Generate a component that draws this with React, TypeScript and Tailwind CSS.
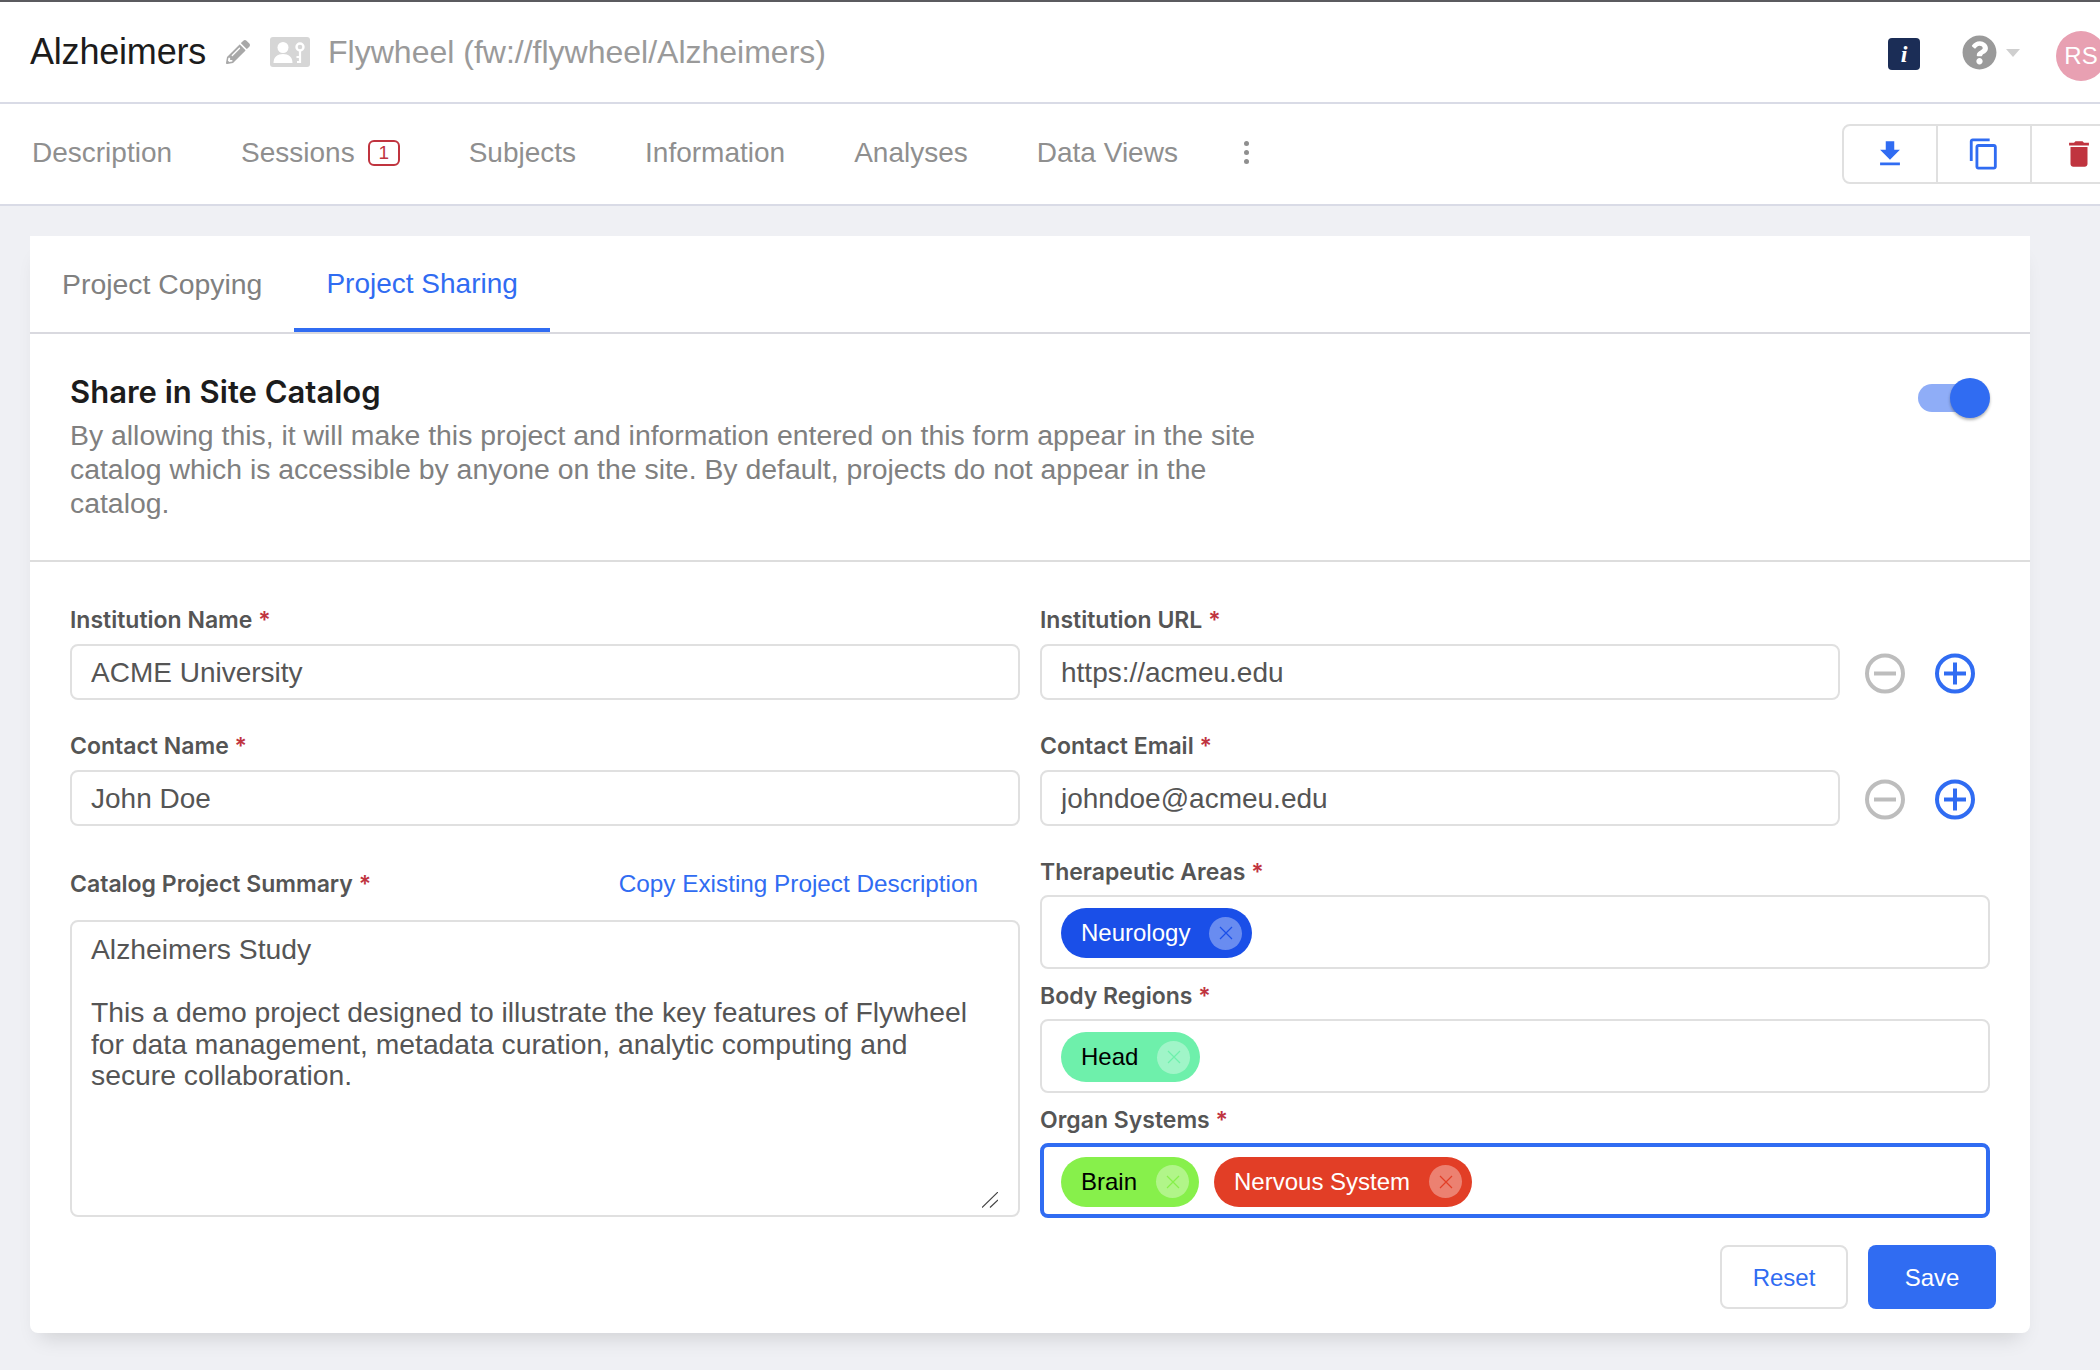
import { FaPencilAlt, FaQuestionCircle } from 'react-icons/fa'
import { MdContentCopy, MdDelete, MdFileDownload } from 'react-icons/md'

const navItems = ['Description', 'Sessions', 'Subjects', 'Information', 'Analyses', 'Data Views']

function Label({ text, className = '' }: { text: string; className?: string }) {
  return (
    <label className={`block h-8 font-['Inter',sans-serif] text-[23px] leading-8 font-semibold text-[#555] ${className}`}>
      {text} <span className="text-[#c0343f]">*</span>
    </label>
  )
}

function TextInput({ value }: { value: string }) {
  return (
    <input
      readOnly
      value={value}
      className="h-[56px] w-full rounded-lg border-2 border-[#e0e0e0] bg-white px-[19px] pt-[2px] text-[28px] text-[#555] outline-none"
    />
  )
}

function RoundIcon({ kind }: { kind: 'minus' | 'plus' }) {
  const color = kind === 'plus' ? '#306cf2' : '#bdbdbd'
  return (
    <svg viewBox="0 0 40 40" className="mt-[3px] h-[41px] w-10 shrink-0" fill="none" stroke={color} strokeWidth="4">
      <circle cx="20" cy="20" r="18" />
      <path d="M9 20h22" />
      {kind === 'plus' && <path d="M20 9v22" />}
    </svg>
  )
}

function Chip({ text, bg, x, dark }: { text: string; bg: string; x: string; dark?: boolean }) {
  return (
    <span className={`mt-[2px] flex h-[50px] items-center gap-[19px] rounded-full pr-[10px] pl-5 text-2xl ${bg} ${dark ? 'text-black' : 'text-white'}`}>
      {text}
      <span className="flex h-[33px] w-[33px] items-center justify-center rounded-full bg-white/35">
        <svg viewBox="0 0 16 16" className="h-4 w-4" fill="none" stroke={x} strokeWidth="1.2">
          <path d="M2 2l12 12M14 2L2 14" />
        </svg>
      </span>
    </span>
  )
}

function TagBox({ children, focused }: { children: React.ReactNode; focused?: boolean }) {
  return (
    <div className={`flex items-center gap-[15px] rounded-lg bg-white ${focused ? 'h-[75px] border-4 border-[#306cf2] pl-[17px]' : 'h-[74px] border-2 border-[#e0e0e0] pl-[19px]'}`}>
      {children}
    </div>
  )
}

function ProjectCardIcon() {
  return (
    <svg viewBox="0 0 40 30" className="h-[30px] w-10" fill="none">
      <rect width="40" height="30" rx="3" fill="#d6d6d6" />
      <circle cx="13" cy="10.5" r="5.5" fill="#fff" />
      <path d="M3.5 26c0-6 4-9 9.500-9s9.500 3 9.500 9z" fill="#fff" />
      <circle cx="30" cy="10" r="3.500" stroke="#fff" strokeWidth="2.400" />
      <path d="M30 14v12M30 20h-3.500M30 25h-3" stroke="#fff" strokeWidth="2.200" />
    </svg>
  )
}

export default function App() {
  return (
    <div className="h-[1370px] w-[2100px] overflow-hidden bg-[#eff0f4] font-['Liberation_Sans',sans-serif]">
      <header className="flex h-[104px] items-center border-t-2 border-b-2 border-t-[#5b5b5f] border-b-[#d9dbe6] bg-white pl-[30px]">
        <h1 className="text-[36px] tracking-[-0.2px] text-[#1c1c1c]">Alzheimers</h1>
        <FaPencilAlt className="ml-5 h-6 w-6 text-[#a8a8a8]" />
        <span className="ml-5"><ProjectCardIcon /></span>
        <span className="ml-[18px] text-[32px] text-[#9a9a9a]">Flywheel (fw://flywheel/Alzheimers)</span>
        <div className="ml-auto flex -mr-[6px] items-center">
          <span className="mt-1 flex h-8 w-8 items-center justify-center rounded bg-[#1b2d56] font-['Liberation_Serif',serif] text-[24px] font-bold text-white italic">i</span>
          <FaQuestionCircle className="ml-[42px] h-[35px] w-[35px] text-[#9a9a9a]" />
          <span className="mt-[2px] ml-[9px] h-0 w-0 border-x-[7.5px] border-t-[8px] border-x-transparent border-t-[#cfcfcf]" />
          <span className="mt-2 ml-9 flex h-[50px] w-[50px] items-center justify-center rounded-full bg-[#e8a0b2] text-2xl text-white">RS</span>
        </div>
      </header>

      <nav className="flex h-[102px] items-center border-b-2 border-[#d9dbe6] bg-white pl-8">
        <div className="flex items-center gap-[69px] pb-[2px] text-[28px] text-[#8f8f8f]">
          {navItems.map((item) => (
            <span key={item} className="flex items-center gap-[13px]">
              {item}
              {item === 'Sessions' && (
                <span className="flex h-[26px] w-8 items-center justify-center rounded-md border-2 border-[#c0343f] text-[19px] text-[#c0343f]">1</span>
              )}
            </span>
          ))}
        </div>
        <span className="mb-[4px] ml-[66px] flex flex-col gap-[4px]">
          <i className="h-[5px] w-[5px] rounded-full bg-[#8f8f8f]" />
          <i className="h-[5px] w-[5px] rounded-full bg-[#8f8f8f]" />
          <i className="h-[5px] w-[5px] rounded-full bg-[#8f8f8f]" />
        </span>
        <div className="ml-auto -mr-[28px] flex h-[60px] divide-x-2 divide-[#e0e0e0] rounded-lg border-2 border-[#e0e0e0]">
          <span className="flex w-[94px] items-center justify-center"><MdFileDownload className="h-[34px] w-[34px] text-[#306cf2]" /></span>
          <span className="flex w-[94px] items-center justify-center"><MdContentCopy className="h-[34px] w-[34px] text-[#306cf2]" /></span>
          <span className="flex w-[94px] items-center justify-center"><MdDelete className="h-[34px] w-[34px] text-[#c0343f]" /></span>
        </div>
      </nav>

      <main className="ml-[30px] mt-[30px] w-[2000px] rounded-b-lg bg-white shadow-[0_14px_20px_-10px_rgba(0,0,0,0.14)]">
        <div className="flex h-[98px] border-b-2 border-[#d9d9df]">
          <span className="flex h-[96px] items-center border-b-4 border-transparent px-8 pt-1 text-[28.4px] text-[#808080]">Project Copying</span>
          <span className="flex h-[96px] items-center border-b-4 border-[#306cf2] px-8 pt-1 text-[28px] text-[#306cf2]">Project Sharing</span>
        </div>

        <section className="flex items-start justify-between border-b-2 border-[#ddd] pt-[42px] pr-10 pb-10 pl-10">
          <div className="w-[1200px]">
            <h2 className="h-[42px] font-['Inter',sans-serif] text-[31px] leading-[32px] font-semibold text-[#1c1c1c]">Share in Site Catalog</h2>
            <p className="text-[28.4px] leading-[34px] text-[#808080]">
              By allowing this, it will make this project and information entered on this form appear in the site catalog which is accessible by anyone on the site. By default, projects do not appear in the catalog.
            </p>
          </div>
          <div className="relative mt-[2px] h-10 w-[72px]">
            <div className="absolute top-[6px] left-0 h-7 w-[67px] rounded-full bg-[#8fadf7]" />
            <div className="absolute top-0 right-0 h-10 w-10 rounded-full bg-[#306cf2] shadow-[0_2px_3px_rgba(0,0,0,0.3)]" />
          </div>
        </section>

        <form className="flex gap-5 px-10 pt-[42px] pb-6">
          <div className="w-[950px] shrink-0">
            <Label text="Institution Name" className="mb-2" />
            <TextInput value="ACME University" />
            <Label text="Contact Name" className="mt-[30px] mb-2" />
            <TextInput value="John Doe" />
            <div className="mt-[42px] mb-5 flex items-center justify-between pr-[42px]">
              <Label text="Catalog Project Summary" />
              <a className="text-[24.3px] leading-8 text-[#306cf2]">Copy Existing Project Description</a>
            </div>
            <div className="relative">
              <textarea
                readOnly
                value={'Alzheimers Study\n\nThis a demo project designed to illustrate the key features of Flywheel for data management, metadata curation, analytic computing and secure collaboration.'}
                className="block h-[297px] w-full resize-none rounded-lg border-2 border-[#e0e0e0] pt-3 pr-[41px] pl-[19px] text-[28.3px] leading-[31.6px] text-[#555] outline-none"
              />
              <svg viewBox="0 0 16 16" className="absolute right-[22px] bottom-[9px] h-4 w-4" fill="none" stroke="#444" strokeWidth="1.2">
                <path d="M16 0L0 15.5M16 8L8 15.5" />
              </svg>
            </div>
          </div>

          <div className="w-[950px] shrink-0">
            <Label text="Institution URL" className="mb-2" />
            <div className="flex items-center">
              <div className="w-[800px] shrink-0"><TextInput value="https://acmeu.edu" /></div>
              <span className="ml-[25px]"><RoundIcon kind="minus" /></span>
              <span className="ml-[30px]"><RoundIcon kind="plus" /></span>
            </div>
            <Label text="Contact Email" className="mt-[30px] mb-2" />
            <div className="flex items-center">
              <div className="w-[800px] shrink-0"><TextInput value="johndoe@acmeu.edu" /></div>
              <span className="ml-[25px]"><RoundIcon kind="minus" /></span>
              <span className="ml-[30px]"><RoundIcon kind="plus" /></span>
            </div>
            <Label text="Therapeutic Areas" className="mt-[30px] mb-[7px]" />
            <TagBox><Chip text="Neurology" bg="bg-[#1a4fe8]" x="#1a4fe8" /></TagBox>
            <Label text="Body Regions" className="mt-[11px] mb-[7px]" />
            <TagBox><Chip text="Head" bg="bg-[#6ef0ab]" x="#6ef0ab" dark /></TagBox>
            <Label text="Organ Systems" className="mt-[11px] mb-[7px]" />
            <TagBox focused>
              <Chip text="Brain" bg="bg-[#87f04b]" x="#87f04b" dark />
              <Chip text="Nervous System" bg="bg-[#e23e26]" x="#e23e26" />
            </TagBox>
            <div className="-mr-[6px] mt-[27px] flex justify-end gap-5 text-2xl">
              <button type="button" className="h-16 w-[128px] rounded-lg border-2 border-[#e0e0e0] pt-[2px] text-[#306cf2]">Reset</button>
              <button type="button" className="h-16 w-[128px] rounded-lg bg-[#306cf2] pt-[2px] text-white">Save</button>
            </div>
          </div>
        </form>
      </main>
    </div>
  )
}
